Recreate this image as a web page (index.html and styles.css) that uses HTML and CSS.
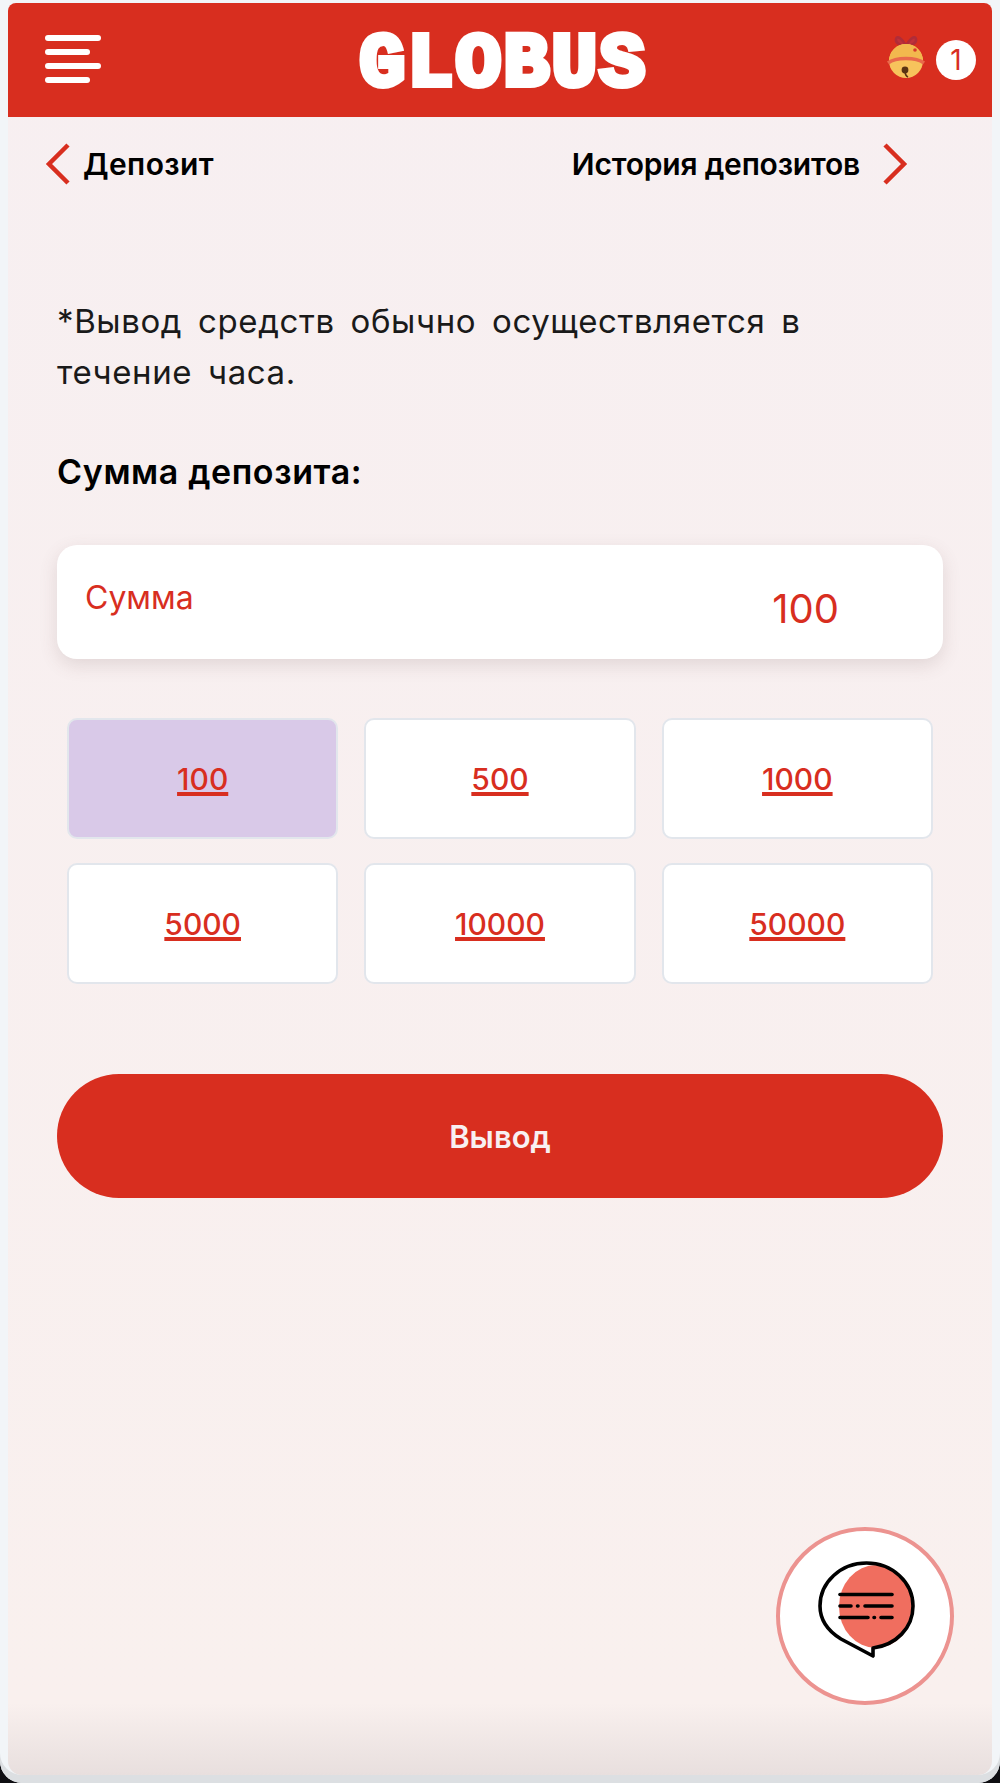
FILE: index.html
```html
<!DOCTYPE html>
<html lang="ru">
<head>
  <meta charset="UTF-8">
  <meta name="viewport" content="width=device-width, initial-scale=1.0">
  <title>Депозит</title>
  <link rel="stylesheet" href="styles.css">
</head>
<body>
  <div class="window">
    <div class="phone">
      <header class="topbar">
        <div class="burger">
          <span></span>
          <span class="short"></span>
          <span></span>
          <span class="short"></span>
        </div>
        <div class="logo">GLOBUS</div>
        <div class="notify">
          <svg class="bell" width="40" height="46" viewBox="0 0 40 46">
            <path d="M20 13 C16 5 11 2 10 6 C9 10 15 13 20 13 C25 13 31 10 30 6 C29 2 24 5 20 13 Z" fill="#c0313a" stroke="#b02c38" stroke-width="2.5"/>
            <circle cx="20" cy="28" r="17" fill="#f7c35c"/>
            <path d="M3 28 A17 17 0 0 1 37 28 C30 23 10 23 3 28 Z" fill="#f2b84e"/>
            <path d="M2 30 C10 24 30 24 38 30" fill="none" stroke="#e9694b" stroke-width="3.5"/>
            <circle cx="29" cy="17" r="1.8" fill="#d8392b"/>
            <circle cx="19" cy="37" r="3.4" fill="#5a3413"/>
            <path d="M19 38 C19 41 20 43 22 44" fill="none" stroke="#5a3413" stroke-width="1.6"/>
          </svg>
          <span class="badge">1</span>
        </div>
      </header>

      <nav class="subnav">
        <a class="subnav-link" href="#">
          <svg width="26" height="44" viewBox="0 0 26 44"><path d="M23 3 L4 22 L23 41" fill="none" stroke="#d82e1f" stroke-width="4.5"/></svg>
          <span>Депозит</span>
        </a>
        <a class="subnav-link history" href="#">
          <span>История депозитов</span>
          <svg width="26" height="44" viewBox="0 0 26 44"><path d="M3 3 L22 22 L3 41" fill="none" stroke="#d82e1f" stroke-width="4.5"/></svg>
        </a>
      </nav>

      <main class="content">
        <p class="note">*Вывод средств обычно осуществляется в течение часа.</p>
        <h2 class="amount-title">Сумма депозита:</h2>

        <div class="amount-box">
          <span class="amount-label">Сумма</span>
          <span class="amount-value">100</span>
        </div>

        <div class="tiles">
          <a class="tile active" href="#">100</a>
          <a class="tile" href="#">500</a>
          <a class="tile" href="#">1000</a>
          <a class="tile" href="#">5000</a>
          <a class="tile" href="#">10000</a>
          <a class="tile" href="#">50000</a>
        </div>

        <button class="submit">Вывод</button>
      </main>

      <a class="chat" href="#">
        <svg width="100" height="110" viewBox="0 0 100 110">
          <ellipse cx="60" cy="51.5" rx="37" ry="41.5" fill="#f06e5f"/>
          <path d="M57 93 C80 90 97 73 97 51 C97 27 76 8 50.5 8 C25 8 4 27 4 51 C4 65 12 76 25 84 L57 101 Z" fill="none" stroke="#000" stroke-width="3.6" stroke-linejoin="round"/>
          <g stroke="#000" stroke-width="3.6" stroke-linecap="round">
            <path d="M24 39.5 H76"/>
            <path d="M24 51 H35 M41.5 51 H42 M49 51 H76"/>
            <path d="M24 62.5 H52 M58 62.5 H58.5 M65 62.5 H76"/>
          </g>
        </svg>
      </a>
    </div>
  </div>
</body>
</html>
```

FILE: styles.css
```css
* {
  box-sizing: border-box;
}
html, body {
  margin: 0;
  padding: 0;
}
body {
  background: #0e0e12;
  font-family: Inter, "Liberation Sans", sans-serif;
}
a {
  color: inherit;
  text-decoration: none;
}
.window {
  height: 1783px;
  padding: 3px 8px 8px;
  background: #f2f5f8;
  border-radius: 0 0 22px 22px;
  box-shadow: inset 0 -8px 0 #dcdfe2;
}
.phone {
  position: relative;
  height: 1772px;
  overflow: hidden;
  border-radius: 8px 8px 14px 14px;
  background: linear-gradient(#f7eff1 0, #f9f0ee 1700px, #e8dfde 100%);
}

/* header */
.topbar {
  display: grid;
  grid-template-columns: 1fr auto 1fr;
  align-items: center;
  height: 114px;
  padding: 0 37px;
  background: #d82e1f;
}
.burger {
  display: flex;
  flex-direction: column;
  gap: 8px;
  margin-top: -3px;
}
.burger span {
  width: 56px;
  height: 6px;
  border-radius: 3px;
  background: #fff;
}
.burger .short {
  width: 45px;
}
.logo {
  margin: 10px 0 0 7px;
  color: #fff;
  font-family: "Liberation Mono", monospace;
  font-size: 76px;
  font-weight: 700;
  line-height: 60px;
  letter-spacing: 2.4px;
  -webkit-text-stroke: 6px #fff;
}
.notify {
  display: flex;
  justify-content: flex-end;
  align-items: center;
  gap: 10px;
  margin-right: -21px;
}
.bell {
  margin-top: -8px;
}
.badge {
  width: 40px;
  height: 40px;
  border-radius: 50%;
  background: #fff;
  color: #d82e1f;
  font-size: 28px;
  line-height: 40px;
  text-align: center;
}

/* sub nav */
.subnav {
  display: flex;
  justify-content: space-between;
  align-items: center;
  height: 58px;
  margin-top: 18px;
  padding: 0 84px 0 37px;
}
.subnav-link {
  display: flex;
  align-items: center;
  gap: 12px;
  color: #000;
  font-size: 30px;
  font-weight: 600;
  letter-spacing: .4px;
}
.history {
  gap: 22px;
  letter-spacing: -.2px;
}

/* form */
.content {
  padding: 0 49px;
}
.note {
  margin: 103px 0 0;
  color: #1a1a1a;
  font-size: 33px;
  line-height: 51px;
  letter-spacing: .6px;
  word-spacing: 6px;
}
.amount-title {
  margin: 54px 0 0;
  color: #000;
  font-size: 34px;
  font-weight: 600;
  line-height: 40px;
  letter-spacing: .6px;
}
.amount-box {
  display: flex;
  justify-content: space-between;
  height: 114px;
  margin-top: 53px;
  padding: 31px 104px 0 28px;
  border-radius: 20px;
  background: #fff;
  box-shadow: 0 6px 18px rgba(110, 80, 80, .16);
  color: #d82e1f;
}
.amount-label {
  font-size: 32px;
  line-height: 44px;
}
.amount-value {
  margin-top: 8px;
  font-size: 40px;
  line-height: 50px;
}
.tiles {
  display: grid;
  grid-template-columns: repeat(3, 1fr);
  grid-auto-rows: 121px;
  gap: 24px 26px;
  margin: 59px 10px 0;
}
.tile {
  display: flex;
  justify-content: center;
  align-items: center;
  border: 2px solid #e2e6ec;
  border-radius: 10px;
  background: #fff;
  color: #d82e1f;
  font-size: 30px;
  font-weight: 500;
  text-decoration: underline;
  text-decoration-thickness: 3.5px;
  text-underline-offset: 2px;
}
.tile.active {
  background: #d9c9e8;
}
.submit {
  display: block;
  width: 100%;
  height: 124px;
  margin-top: 90px;
  border: 0;
  border-radius: 62px;
  background: #d82e1f;
  color: #f8f0f2;
  font-family: inherit;
  font-size: 31px;
  font-weight: 600;
}

/* floating chat button */
.chat {
  position: absolute;
  left: 768px;
  top: 1524px;
  display: flex;
  justify-content: center;
  align-items: center;
  width: 178px;
  height: 178px;
  padding: 0 0 12px 2px;
  border: 4px solid #ec9390;
  border-radius: 50%;
  background: #fff;
}
```
